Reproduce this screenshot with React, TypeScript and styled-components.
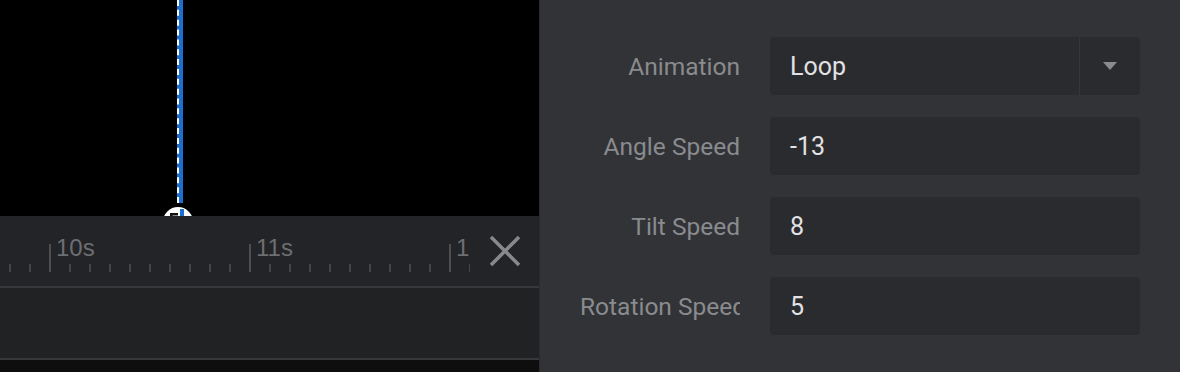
import React from 'react';
import styled, { createGlobalStyle } from 'styled-components';

const GlobalStyle = createGlobalStyle`
  html, body { margin: 0; padding: 0; background: #323336; }
  body { width: 1180px; height: 372px; overflow: hidden; font-family: Roboto, "Noto Sans", sans-serif; }
  * { box-sizing: border-box; }
`;

const Layout = styled.div`
  display: flex;
  width: 1180px;
  height: 372px;
`;

const LeftPane = styled.div`
  width: 540px;
  display: flex;
  flex-direction: column;
  border-right: 1px solid #2a2b2e;
`;

const Video = styled.div`
  height: 216px;
  background: #000;
  position: relative;
  overflow: hidden;
`;

const PlayheadLine = styled.div`
  position: absolute;
  left: 177px;
  top: 0;
  height: 203px;
  width: 6px;
  border-left: 2px dashed #ffffff;
  background: #1b6fd0;
`;

const PlayheadHandle = styled.div`
  position: absolute;
  left: 163px;
  top: 207px;
  width: 30px;
  height: 30px;
  border-radius: 50%;
  background: #ffffff;
  display: flex;
  align-items: center;
  justify-content: center;
`;

const Ruler = styled.div`
  height: 72px;
  background: #232427;
  border-bottom: 2px solid #37383b;
  display: flex;
`;

const Scale = styled.div`
  width: 470px;
  flex: none;
  display: flex;
  align-items: flex-end;
  gap: 18px;
  padding: 0 0 14px 9px;
  overflow: hidden;
`;

const Tick = styled.div<{ $major?: boolean }>`
  flex: none;
  position: relative;
  width: 2px;
  height: ${(p) => (p.$major ? 28 : 8)}px;
  background: ${(p) => (p.$major ? '#4d4e52' : '#444549')};
`;

const TickLabel = styled.span`
  position: absolute;
  left: 7px;
  top: -8px;
  font-family: "Liberation Sans", Arial, sans-serif;
  font-size: 24px;
  line-height: 24px;
  color: #6d6e72;
  white-space: nowrap;
`;

const CloseButton = styled.button`
  flex: 1;
  border: none;
  background: transparent;
  display: flex;
  align-items: center;
  justify-content: center;
  padding: 0 0 0 1px;
`;

const Track = styled.div`
  height: 72px;
  background: #212224;
  border-bottom: 2px solid #37383b;
`;

const BottomStrip = styled.div`
  flex: 1;
  background: #0e0e0e;
`;

const RightPane = styled.div`
  flex: 1;
  background: #323336;
  padding: 37px 40px 0 40px;
`;

const Form = styled.div`
  display: grid;
  grid-template-columns: 160px 370px;
  grid-auto-rows: 58px;
  column-gap: 30px;
  row-gap: 22px;
`;

const Label = styled.div`
  align-self: center;
  text-align: right;
  white-space: nowrap;
  overflow: hidden;
  font-size: 24.5px;
  color: #898b8f;
`;

const Field = styled.div`
  display: flex;
  align-items: center;
  background: #2a2b2e;
  border-radius: 4px;
  overflow: hidden;
`;

const Value = styled.div`
  flex: 1;
  padding-left: 20px;
  font-size: 25px;
  color: #e2e2e4;
`;

const Divider = styled.div`
  width: 1px;
  align-self: stretch;
  background: #36373b;
`;

const ArrowBox = styled.div`
  width: 60px;
  align-self: stretch;
  display: flex;
  align-items: center;
  justify-content: center;
`;

const ticks = Array.from({ length: 24 }, (_, i) => i);
const labels: Record<number, string> = { 2: '10s', 12: '11s', 22: '12s' };

const rows: { label: string; value: string; select?: boolean }[] = [
  { label: 'Animation', value: 'Loop', select: true },
  { label: 'Angle Speed', value: '-13' },
  { label: 'Tilt Speed', value: '8' },
  { label: 'Rotation Speed', value: '5' },
];

export default function App() {
  return (
    <>
      <GlobalStyle />
      <Layout>
        <LeftPane>
          <Video>
            <PlayheadLine />
            <PlayheadHandle>
              <svg width="30" height="30" viewBox="0 0 30 30">
                <path d="M7 6h8v2.5H9.5V14H7z" fill="#111" />
                <rect x="17" y="2" width="4" height="22" fill="#1b6fd0" />
              </svg>
            </PlayheadHandle>
          </Video>
          <Ruler>
            <Scale>
              {ticks.map((i) => (
                <Tick key={i} $major={i in labels}>
                  {labels[i] && <TickLabel>{labels[i]}</TickLabel>}
                </Tick>
              ))}
            </Scale>
            <CloseButton aria-label="Close">
              <svg width="32" height="32" viewBox="0 0 32 32">
                <path d="M2 2L30 30M30 2L2 30" stroke="#88898c" strokeWidth="3.5" />
              </svg>
            </CloseButton>
          </Ruler>
          <Track />
          <BottomStrip />
        </LeftPane>
        <RightPane>
          <Form>
            {rows.map((r) => (
              <React.Fragment key={r.label}>
                <Label>{r.label}</Label>
                <Field>
                  <Value>{r.value}</Value>
                  {r.select && (
                    <>
                      <Divider />
                      <ArrowBox>
                        <svg width="16" height="10" viewBox="0 0 16 10">
                          <path d="M1 1h14L8 9z" fill="#8a8b8e" />
                        </svg>
                      </ArrowBox>
                    </>
                  )}
                </Field>
              </React.Fragment>
            ))}
          </Form>
        </RightPane>
      </Layout>
    </>
  );
}
